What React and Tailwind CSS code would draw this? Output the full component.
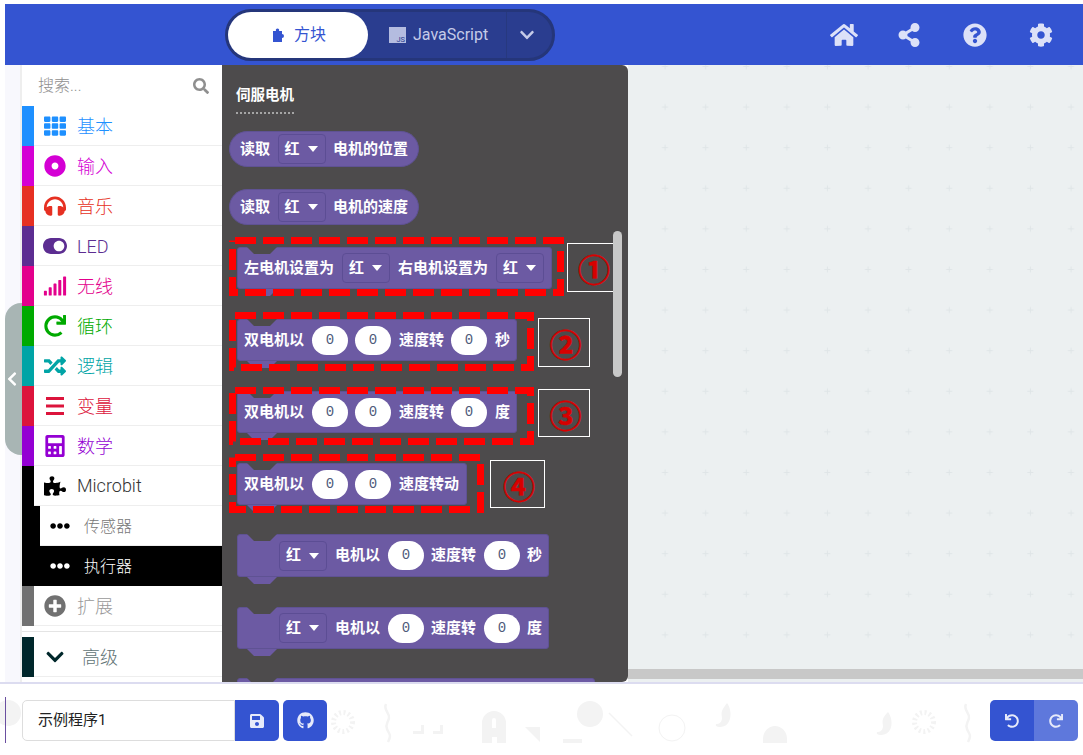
import { FaHome, FaShareAlt, FaQuestionCircle, FaCog, FaPuzzlePiece, FaSearch, FaTh, FaDotCircle, FaHeadphones, FaToggleOn, FaSignal, FaRedo, FaUndo, FaRandom, FaCalculator, FaEllipsisH, FaPlusCircle, FaChevronDown, FaChevronLeft, FaSave, FaGithub } from "react-icons/fa";

const categories = [
    { name: "基本", color: "#1E90FF", Icon: FaTh },
    { name: "输入", color: "#D400D4", Icon: FaDotCircle },
    { name: "音乐", color: "#E63022", Icon: FaHeadphones },
    { name: "LED", color: "#5C2D91", Icon: FaToggleOn, size: "w-[24px] h-[24px]" },
    { name: "无线", color: "#E3008C", Icon: FaSignal, size: "w-[24px] h-[24px]" },
    { name: "循环", color: "#00AA00", Icon: FaRedo },
    { name: "逻辑", color: "#00A4A6", Icon: FaRandom },
    { name: "变量", color: "#DC143C", Icon: BarsIcon, size: "w-[20px] h-[20px]" },
    { name: "数学", color: "#9400D3", Icon: FaCalculator },
];

function BarsIcon({ className, style }) {
    return (
        <svg viewBox="0 0 20 20" className={className} style={style}>
            <path d="M1 1h18v3H1zM1 8.500h18v3H1zM1 16h18v3H1z" fill="currentColor" />
        </svg>
    );
}

function Row({ item }) {
    const { Icon } = item;
    return (
        <div className="flex h-10 shrink-0">
            <div className="w-3" style={{ backgroundColor: item.color }} />
            <div className="flex flex-1 border-b border-[#eeeeee]">
                <div className="w-[41px] flex items-center justify-center" style={{ color: item.color }}>
                    <Icon className={item.size || "w-[22px] h-[22px]"} />
                </div>
                <span className="ml-[2px] pt-px text-[18px] font-light leading-10" style={{ color: item.color }}>{item.name}</span>
            </div>
        </div>
    );
}

function Dropdown() {
    return (
        <div className="h-[30px] w-[48px] shrink-0 rounded border border-[#5c4d94] flex items-center pl-[6px]">
            <span>红</span>
            <svg viewBox="0 0 10 6" className="w-[10px] h-[6px] ml-[8px]"><path d="M0 0h10L5 6z" fill="#fff" /></svg>
        </div>
    );
}

function Zero({ tight }) {
    return (
        <div className={`w-9 h-[29px] shrink-0 rounded-full bg-white flex items-center justify-center text-[#4f5b7a] font-normal text-[14px] font-['Liberation_Mono',monospace] ${tight ? "-ml-px" : ""}`}>0</div>
    );
}

function Pill({ tail, className }) {
    return (
        <div className={`ml-[7px] w-[190px] h-9 shrink-0 rounded-full bg-[#6c5aa3] border border-[#5f5293] flex items-center pl-[10px] gap-[7.5px] text-white text-[15px] font-bold ${className || ""}`}>
            <span>读取</span>
            <Dropdown />
            <span>{tail}</span>
        </div>
    );
}

// statement block with the notch on top and the tab below
function Block({ width, height = 42, className, left = 6, children, overlay }) {
    return (
        <div className={`relative ml-[15px] shrink-0 rounded-[3px] bg-[#6c5aa3] border border-[#5f5293] flex items-center gap-2 text-white text-[15px] font-bold ${className}`} style={{ width, height, paddingLeft: left }}>
            <svg viewBox="0 0 30 7" className="absolute top-[-1px] left-[9px] w-[30px] h-[7px]"><path d="M0 0L7 7H23L30 0z" fill="#4d4b4c" /></svg>
            <svg viewBox="0 0 30 7" className="absolute bottom-[-8px] left-[9px] w-[30px] h-[7px]"><path d="M0 0L7 7H23L30 0z" fill="#6c5aa3" /></svg>
            {children}
            {overlay}
        </div>
    );
}

function Marked({ w, h, x, y }) {
    return (
        <svg className="absolute pointer-events-none z-10" style={{ left: x, top: y }} width={w} height={h}>
            <rect x="3.500" y="3.500" width={w - 7} height={h - 7} fill="none" stroke="#ff0000" strokeWidth="7" strokeDasharray="21 7" strokeDashoffset={-2.5} />
        </svg>
    );
}

function Note({ n, x, y, w, h }) {
    return (
        <div className="absolute border border-white flex items-center justify-center text-[#d70000] text-[32px] font-bold leading-none pt-[7px] pl-[3px] [-webkit-text-stroke:0.5px_#d70000]" style={{ left: x, top: y, width: w, height: h }}>{n}</div>
    );
}

// faint doodles behind the footer, drawn in page coordinates
function Decor() {
    const spinner = { fill: "none", stroke: "#f3f3f3", strokeWidth: 5, strokeDasharray: "2 2.500" };
    const line = { fill: "none", stroke: "#f3f3f3", strokeWidth: 2.500 };
    return (
        <svg className="absolute left-0 top-[13px] w-[1083px] h-[46px]" viewBox="0 697 1083 46" fill="#f3f3f3">
            <circle cx="8" cy="713" r="13" />
            <rect x="5" y="697" width="1" height="46" fill="#6a4fa0" />
            <circle cx="343" cy="722" r="9.500" {...spinner} />
            <path d="M386 704c-3 6 4 9 3 14s-4 6-2 11s5 6 1 13" {...line} />
            <path d="M413 734v-3h8v-6h3v9zM433 734v-3h7v-6h3v9z" />
            <path d="M482 743V723a12 12 0 0 1 24 0v20h-9v-6h-5v6zM492 728h4v-8a2 2 0 0 0-4 0z" fillRule="evenodd" />
            <path d="M525 727h15v15z" />
            <rect x="563" y="739" width="19" height="4" />
            <circle cx="590" cy="714" r="13" />
            <path d="M609 713l23 23" fill="none" stroke="#f3f3f3" strokeWidth="1.500" />
            <circle cx="672" cy="728" r="13" fill="none" stroke="#f3f3f3" />
            <path d="M727 703c6 8 5 24-7 24c-3 0-5-1-4-3c3 0 5-1 6-5c0-3-1-5 0-8c1-3 3-5 5-8z" />
            <path d="M763 743v-4a12 13 0 0 1 24 0v4z" />
            <path d="M888 712c6 8 5 23-7 23c-3 0-5-1-4-3c3 0 5-1 6-5c0-3-1-5 0-8c1-3 3-5 5-7z" />
            <circle cx="924" cy="722" r="9.500" {...spinner} />
            <path d="M966 704c-3 6 4 9 3 14s-4 6-2 11s5 6 1 13" {...line} />
        </svg>
    );
}

export default function App() {
    return (
        <div className="w-[1083px] h-[755px] overflow-hidden bg-white pt-1 pl-[5px] flex flex-col font-['Roboto','Noto_Sans_CJK_SC',sans-serif]">
            {/* top bar */}
            <header className="h-[61px] shrink-0 bg-[#3454d1] flex items-center relative">
                <div className="ml-[220px] w-[330px] h-[52px] shrink-0 rounded-full bg-[#2a3d8f] border-[3px] border-[#25367a] flex items-center">
                    <div className="w-[140px] h-[46px] shrink-0 rounded-full bg-white flex items-center justify-center gap-[9px] pl-[3px] text-[#3454d1] text-[16px]">
                        <svg viewBox="0 0 12 14" className="w-3 h-[14px]">
                            <path d="M0 3h3a1.700 1.700 0 1 1 3 0h3v3a1.800 1.800 0 1 1 0 4v4H0z" fill="currentColor" />
                        </svg>
                        <span>方块</span>
                    </div>
                    <div className="w-[139px] h-full shrink-0 flex items-center pl-[21px] text-[#c5cbe8] text-[16px] border-r border-[#27397f]">
                        <svg viewBox="0 0 17 16" className="w-[17px] h-4 mr-[7px]">
                            <path d="M0 0h17v16H0z" fill="#b4bce0" />
                            <text x="16" y="14.500" textAnchor="end" fontSize="7.500" fill="#2a3d8f">JS</text>
                        </svg>
                        <span>JavaScript</span>
                    </div>
                    <div className="flex-1 flex justify-center pr-[6px] text-[#c5cbe8]">
                        <FaChevronDown className="w-4 h-4" />
                    </div>
                </div>
                <div className="ml-auto mr-[30px] flex items-center gap-[42px] text-[#dce1f8]">
                    <FaHome className="w-7 h-7 -mr-[3px] -ml-px" />
                    <FaShareAlt className="w-6 h-6" />
                    <FaQuestionCircle className="w-6 h-6" />
                    <FaCog className="w-6 h-6" />
                </div>
            </header>

            <div className="flex h-[617px] shrink-0 relative">
                {/* sidebar */}
                <div className="w-[15px] bg-[#f8f8fd]" />
                <div className="w-[2px] bg-[#eeeeee]" />
                <aside className="w-[200px] bg-white flex flex-col">
                    <div className="h-[41px] shrink-0 flex items-center pl-[16px] pr-[13px] justify-between text-[#8f8f8f]">
                        <span className="text-[16px] font-light">搜索...</span>
                        <FaSearch className="w-4 h-4" />
                    </div>
                    {categories.map((item) => (
                        <Row key={item.name} item={item} />
                    ))}
                    <div className="flex h-10 shrink-0">
                        <div className="w-3 bg-black" />
                        <div className="flex flex-1 border-b border-[#eeeeee]">
                            <div className="w-[41px] flex items-center justify-center text-black"><FaPuzzlePiece className="w-[22px] h-[22px]" /></div>
                            <span className="ml-[2px] text-[18px] font-light leading-10 text-[#333333]">Microbit</span>
                        </div>
                    </div>
                    <div className="flex h-10 shrink-0">
                        <div className="w-[18px] bg-black" />
                        <div className="flex flex-1 border-b border-[#eeeeee]">
                            <div className="w-10 flex items-center justify-center text-black"><FaEllipsisH className="w-5 h-5" /></div>
                            <span className="ml-1 pt-px text-[16px] font-light leading-10 text-[#777777]">传感器</span>
                        </div>
                    </div>
                    <div className="flex h-10 shrink-0 bg-black pl-[18px]">
                        <div className="w-10 flex items-center justify-center text-white"><FaEllipsisH className="w-5 h-5" /></div>
                        <span className="ml-1 pt-px text-[16px] font-light leading-10 text-white">执行器</span>
                    </div>
                    <div className="flex h-10 shrink-0">
                        <div className="w-3 bg-[#717171]" />
                        <div className="flex flex-1 border-b border-[#eeeeee]">
                            <div className="w-[41px] flex items-center justify-center text-[#717171]"><FaPlusCircle className="w-[22px] h-[22px]" /></div>
                            <span className="ml-[2px] pt-px text-[18px] font-light leading-10 text-[#999999]">扩展</span>
                        </div>
                    </div>
                    <div className="mt-[5px] h-[6px] shrink-0 border-t border-[#e4e4e4]" />
                    <div className="flex h-10 shrink-0">
                        <div className="w-3 bg-[#00272b]" />
                        <div className="flex flex-1 border-b border-[#eeeeee]">
                            <div className="w-[41px] flex items-center justify-center text-[#00272b]"><FaChevronDown className="w-[20px] h-[20px]" /></div>
                            <span className="ml-[7px] pt-px text-[18px] font-light leading-10 text-[#5f7375]">高级</span>
                        </div>
                    </div>
                </aside>

                {/* collapse handle */}
                <div className="absolute left-0 top-[238px] w-[17px] h-[152px] rounded-l-[16px] bg-[#a8b5b4] flex items-center justify-center pr-[3px] text-white">
                    <FaChevronLeft className="w-4 h-4" />
                </div>

                {/* flyout */}
                <div className="relative z-10 w-[406px] h-[617px] bg-[#4d4b4c] rounded-r-[6px] overflow-hidden flex flex-col">
                    <div className="ml-[14px] mt-[21px] w-[58px] h-[45px] shrink-0 text-white text-[14.5px] font-bold leading-5">
                        <span className="whitespace-nowrap">伺服电机</span>
                        <div className="mt-[6px] border-t-2 border-dotted border-[#a5a5a5]" />
                    </div>
                    <Pill tail="电机的位置" />
                    <Pill tail="电机的速度" className="mt-[22px]" />
                    <Block width={315} className="mt-[22px]" overlay={<><Marked w={335} h={59} x={-9} y={-11} /><Note n="①" x={329} y={-5} w={51} h={49} /></>}>
                        <span>左电机设置为</span>
                        <Dropdown />
                        <span>右电机设置为</span>
                        <Dropdown />
                    </Block>
                    <Block width={280} className="mt-[30px]" overlay={<><Marked w={305} h={59} x={-9} y={-8} /><Note n="②" x={300} y={-2} w={52} h={49} /></>}>
                        <span>双电机以</span>
                        <Zero /><Zero tight />
                        <span>速度转</span>
                        <Zero tight />
                        <span>秒</span>
                    </Block>
                    <Block width={280} className="mt-[30px]" overlay={<><Marked w={305} h={58} x={-9} y={-5} /><Note n="③" x={300} y={-3} w={52} h={48} /></>}>
                        <span>双电机以</span>
                        <Zero /><Zero tight />
                        <span>速度转</span>
                        <Zero tight />
                        <span>度</span>
                    </Block>
                    <Block width={230} className="mt-[30px]" overlay={<><Marked w={255} h={59} x={-9} y={-10} /><Note n="④" x={252} y={-4} w={55} h={48} /></>}>
                        <span>双电机以</span>
                        <Zero /><Zero tight />
                        <span>速度转动</span>
                    </Block>
                    <Block width={312} height={43} left={41} className="mt-[29px]">
                        <Dropdown />
                        <span>电机以</span>
                        <Zero />
                        <span className="-ml-px">速度转</span>
                        <Zero />
                        <span className="-ml-px">秒</span>
                    </Block>
                    <Block width={312} left={41} className="mt-[30px]">
                        <Dropdown />
                        <span>电机以</span>
                        <Zero />
                        <span className="-ml-px">速度转</span>
                        <Zero />
                        <span className="-ml-px">度</span>
                    </Block>
                    <Block width={358} left={41} className="mt-[29px]" />
                    <div className="absolute left-[391px] top-[166px] w-[9px] h-[146px] rounded-full bg-[#c8c8c8] z-20" />
                </div>

                {/* workspace */}
                <div className="relative flex-1 bg-[#ecf0f1]">
                    <svg className="absolute inset-0 w-full h-[604px]">
                        <defs>
                            <pattern id="grid" x="0" y="-3" width="40.600" height="40.600" patternUnits="userSpaceOnUse">
                                <path d="M34 4.500h6M37 1.500v6" stroke="#dfe5e7" strokeWidth="1" />
                            </pattern>
                        </defs>
                        <rect width="100%" height="100%" fill="url(#grid)" />
                    </svg>
                    <div className="absolute left-0 right-0 bottom-[3px] h-[10px] bg-[#c8c8c8]" />
                </div>
            </div>

            {/* bottom bar */}
            <footer className="relative flex-1 -ml-[5px] border-t-2 border-[#dcdcf0] bg-white">
                <Decor />
                <div className="relative flex items-start pt-4 pl-[22px] pr-[5px]">
                    <div className="w-[213px] h-[41px] border border-[#dddddd] rounded-l-[5px] bg-white flex items-center pl-[15px] text-[15px] text-[#222222]">示例程序1</div>
                    <div className="w-[44px] h-[41px] bg-[#3454d1] rounded-r-[5px] flex items-center justify-center text-[#e6eafa]"><FaSave className="w-4 h-4" /></div>
                    <div className="ml-1 w-[44px] h-[41px] bg-[#3454d1] rounded-[5px] flex items-center justify-center text-[#e6eafa]"><FaGithub className="w-[17px] h-[17px]" /></div>
                    <div className="ml-auto w-[44px] h-[41px] bg-[#3454d1] rounded-l-[5px] flex items-center justify-center text-[#e6eafa]"><FaUndo className="w-[14px] h-[14px]" /></div>
                    <div className="w-[44px] h-[41px] bg-[#5e78dc] rounded-r-[5px] flex items-center justify-center text-[#e6eafa]"><FaRedo className="w-[14px] h-[14px]" /></div>
                </div>
            </footer>
        </div>
    );
}
